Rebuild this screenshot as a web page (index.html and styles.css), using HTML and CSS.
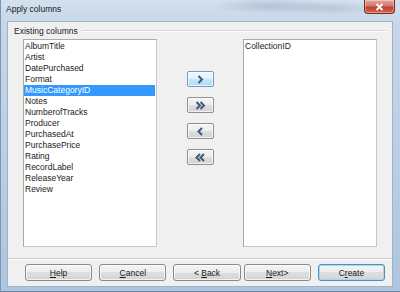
FILE: index.html
```html
<!DOCTYPE html>
<html lang="en">

<head>
    <meta charset="UTF-8">
    <title>Apply columns</title>
    <link rel="stylesheet" href="styles.css">
</head>

<body>
    <div class="window">
        <div class="titlebar">
            <span class="title">Apply columns</span>
            <button class="close-button" aria-label="Close">
                <svg width="9" height="8" viewBox="0 0 9 8">
                    <path d="M1.5 1 L7.5 7 M7.5 1 L1.5 7" stroke="#ffffff" stroke-width="1.8" fill="none" />
                </svg>
            </button>
        </div>

        <div class="client">
            <div class="group-header">
                <span class="group-label">Existing columns</span>
                <span class="group-line"></span>
            </div>

            <div class="columns">
                <ul class="column-list">
                    <li>AlbumTitle</li>
                    <li>Artist</li>
                    <li>DatePurchased</li>
                    <li>Format</li>
                    <li class="selected">MusicCategoryID</li>
                    <li>Notes</li>
                    <li>NumberofTracks</li>
                    <li>Producer</li>
                    <li>PurchasedAt</li>
                    <li>PurchasePrice</li>
                    <li>Rating</li>
                    <li>RecordLabel</li>
                    <li>ReleaseYear</li>
                    <li>Review</li>
                </ul>

                <div class="move-buttons">
                    <button class="move-button hover" aria-label="Add">
                        <svg width="7" height="9" viewBox="0 0 7 9">
                            <path d="M1.5 1 L5 4.5 L1.5 8" />
                        </svg>
                    </button>
                    <button class="move-button" aria-label="Add all">
                        <svg width="11" height="9" viewBox="0 0 11 9">
                            <path d="M1.5 1 L5 4.5 L1.5 8 M5.5 1 L9 4.5 L5.5 8" />
                        </svg>
                    </button>
                    <button class="move-button" aria-label="Remove">
                        <svg width="7" height="9" viewBox="0 0 7 9">
                            <path d="M5 1 L1.5 4.5 L5 8" />
                        </svg>
                    </button>
                    <button class="move-button" aria-label="Remove all">
                        <svg width="11" height="9" viewBox="0 0 11 9">
                            <path d="M5 1 L1.5 4.5 L5 8 M9 1 L5.5 4.5 L9 8" />
                        </svg>
                    </button>
                </div>

                <ul class="column-list">
                    <li>CollectionID</li>
                </ul>
            </div>

            <div class="separator"></div>

            <div class="footer">
                <button class="push-button"><u>H</u>elp</button>
                <button class="push-button"><u>C</u>ancel</button>
                <button class="push-button back">&lt; <u>B</u>ack</button>
                <button class="push-button"><u>N</u>ext&gt;</button>
                <button class="push-button default">C<u>r</u>eate</button>
            </div>
        </div>
    </div>
</body>

</html>
```

FILE: styles.css
```css
body {
    margin: 0;
    font-family: "Liberation Sans", Arial, sans-serif;
    font-size: 8.5px;
    color: #1a1a1a;
}

.window {
    width: 400px;
    height: 292px;
    display: flex;
    flex-direction: column;
    box-sizing: border-box;
    background: linear-gradient(to bottom, #c9d8e9, #b9cde4 60%, #aec5df);
    border-left: 1px solid #7d95b0;
    border-bottom: 1px solid #6f87a3;
}

.titlebar {
    height: 21px;
    display: flex;
    align-items: flex-start;
    justify-content: space-between;
    background:
        radial-gradient(ellipse 60px 8px at 270px 6px, rgba(120, 140, 170, 0.35), transparent),
        radial-gradient(ellipse 50px 7px at 330px 8px, rgba(130, 150, 175, 0.3), transparent),
        linear-gradient(to bottom, #d4e0ed, #c8d8ea);
}

.title {
    margin: 4px 0 0 5px;
    font-size: 8.5px;
    color: #1a1a1a;
}

.close-button {
    width: 31px;
    height: 14px;
    margin-right: 5px;
    padding: 0;
    display: flex;
    align-items: center;
    justify-content: center;
    border: 1px solid #7a2a22;
    border-top: none;
    border-radius: 0 0 4px 4px;
    background: linear-gradient(to bottom, #e3a99f, #d27666 45%, #c0402e 55%, #cf6a52);
    box-shadow: inset 0 0 0 1px rgba(255, 255, 255, 0.35);
}

.client {
    flex: 1;
    margin: 0 7px 4px 6px;
    display: flex;
    flex-direction: column;
    background: #f0f0f0;
    border: 1px solid #9fb2c7;
}

.group-header {
    height: 17px;
    display: flex;
    align-items: center;
}

.group-label {
    margin-left: 6px;
}

.group-line {
    flex: 1;
    height: 0;
    margin: 1px 6px 0 4px;
    border-top: 1px solid #d5d5d5;
    border-bottom: 1px solid #ffffff;
}

.columns {
    height: 208px;
    display: flex;
    padding-left: 15px;
}

.column-list {
    width: 134px;
    margin: 0;
    padding: 1px 0 0;
    list-style: none;
    box-sizing: border-box;
    background: #fff;
    border: 1px solid #a9a9a9;
    border-right-color: #c8c8c8;
    border-bottom-color: #c8c8c8;
}

.column-list li {
    height: 11px;
    line-height: 11px;
    padding-left: 1px;
    margin-right: 1px;
    white-space: nowrap;
}

.column-list li.selected {
    background: #3399ff;
    color: #fff;
}

.move-buttons {
    width: 86px;
    display: flex;
    flex-direction: column;
    align-items: center;
    gap: 10px;
    padding-top: 32px;
    box-sizing: border-box;
}

.move-button {
    width: 27px;
    height: 16px;
    padding: 0;
    display: flex;
    align-items: center;
    justify-content: center;
    border: 1px solid #8e8f8f;
    border-radius: 2px;
    background: linear-gradient(to bottom, #f4f4f4, #ececec 50%, #dedede 50%, #d2d2d2);
    box-shadow: inset 0 0 0 1px rgba(255, 255, 255, 0.7);
}

.move-button.hover {
    border-color: #6d9cc4;
    background: linear-gradient(to bottom, #eef8fe, #ddf1fc 50%, #c3e7fc 50%, #aedbf6);
}

.move-button svg path {
    fill: none;
    stroke: #3f5877;
    stroke-width: 2;
}

.separator {
    margin-top: 11px;
    border-top: 1px solid #c9c9c9;
    border-bottom: 1px solid #ffffff;
}

.footer {
    display: flex;
    padding: 4px 0 0 17px;
}

.push-button {
    width: 68px;
    height: 17px;
    margin-right: 7px;
    padding: 0;
    font-family: "Liberation Sans", Arial, sans-serif;
    font-size: 8.5px;
    color: #1a1a1a;
    border: 1px solid #8a8a8a;
    border-radius: 3px;
    background: linear-gradient(to bottom, #f4f4f4, #ececec 50%, #dfdfdf 50%, #d3d3d3);
    box-shadow: inset 0 0 0 1px rgba(255, 255, 255, 0.7);
}

.push-button.back {
    margin-right: 3px;
}

.push-button.default {
    border-color: #4f8fbd;
    box-shadow: inset 0 0 0 1px #a6d8f2;
}
```
